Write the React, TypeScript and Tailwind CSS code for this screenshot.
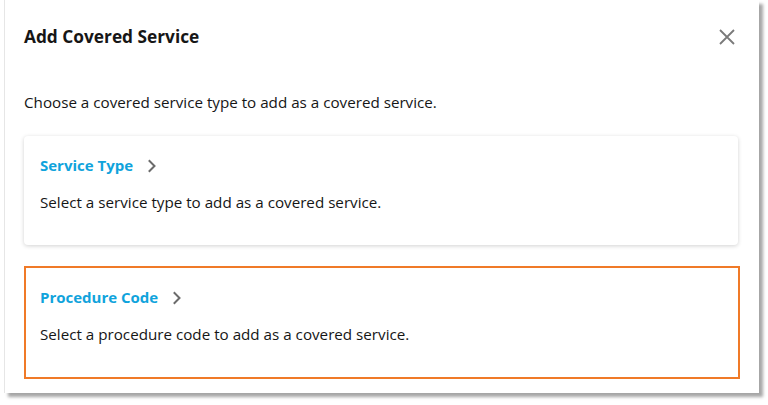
import React from "react";

function Chevron() {
  return (
    <svg width="10" height="14" viewBox="0 0 10 14" className="ml-[14px] mt-[1px]" fill="none">
      <path d="M2.5 2 L7.5 7 L2.5 12" stroke="#6b6b6b" strokeWidth="2" strokeLinecap="square" />
    </svg>
  );
}

export default function App() {
  return (
    <div className="w-[768px] h-[405px] bg-white" style={{ fontFamily: '"Open Sans", "Noto Sans", sans-serif' }}>
      <div className="ml-[4px] w-[755px] h-[393px] bg-white border-l border-[#e6e6e6] shadow-[4px_4px_3px_rgba(0,0,0,0.35)] pl-[19px] pr-[20px] pt-[24px]">
        <div className="flex items-start justify-between">
          <h1 className="text-[17.3px] leading-[26px] font-bold text-[#161616]">Add Covered Service</h1>
          <svg width="16" height="16" viewBox="0 0 16 16" className="mt-[5px] mr-[4px]">
            <path d="M1 1 L15 15 M15 1 L1 15" stroke="#7a7a7a" strokeWidth="1.8" />
          </svg>
        </div>
        <p className="mt-[41px] text-[15.2px] leading-[22px] text-[#161616]">
          Choose a covered service type to add as a covered service.
        </p>
        <div className="mt-[23px] w-[714px] h-[109px] rounded-[4px] bg-white shadow-[0_1px_4px_rgba(0,0,0,0.18)] px-[16px] pt-[16px]">
          <div className="flex items-center">
            <span className="text-[15px] leading-[26px] font-bold text-[#10a3dc]">Service Type</span>
            <Chevron />
          </div>
          <p className="mt-[13px] text-[15.2px] leading-[22px] text-[#161616]">
            Select a service type to add as a covered service.
          </p>
        </div>
        <div className="mt-[21px] w-[716px] h-[113px] border-2 border-[#f07a28] bg-white px-[14px] pt-[16px]">
          <div className="flex items-center">
            <span className="text-[15px] leading-[26px] font-bold text-[#10a3dc]">Procedure Code</span>
            <Chevron />
          </div>
          <p className="mt-[13px] text-[15.2px] leading-[22px] text-[#161616]">
            Select a procedure code to add as a covered service.
          </p>
        </div>
      </div>
    </div>
  );
}
